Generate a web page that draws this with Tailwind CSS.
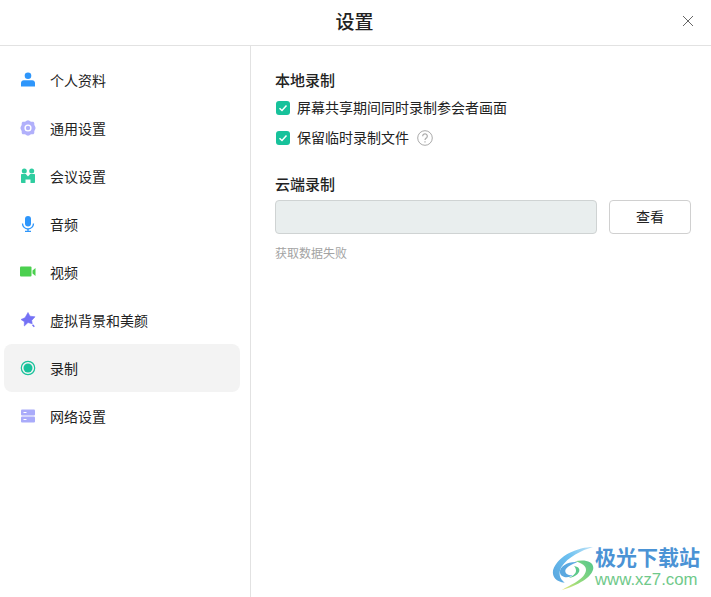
<!DOCTYPE html>
<html lang="zh">
<head>
<meta charset="utf-8">
<script src="https://cdn.jsdelivr.net/npm/@tailwindcss/browser@4"></script>
</head>
<body class="bg-white">
<div class="relative w-[711px] h-[597px] overflow-hidden flex flex-col bg-white text-[#222] font-['Liberation_Sans','Noto_Sans_CJK_SC',sans-serif]">
  <header class="relative h-[46px] shrink-0 border-b border-[#e2e2e2] flex items-center justify-center">
    <h1 class="text-[19px] font-medium leading-none text-[#222] -ml-[2px]">设置</h1>
    <svg class="absolute left-[682px] top-[15px] w-3 h-3" viewBox="0 0 12 12" fill="none" stroke="#666" stroke-width="1"><path d="M1 1l10 10M11 1L1 11"/></svg>
  </header>
  <div class="flex flex-1 min-h-0">
    <nav class="w-[251px] shrink-0 border-r border-[#e2e2e2] pt-[10px] pl-[4px] pr-[10px] text-[14px] text-[#222]">
      <a class="h-12 flex items-center gap-[14px] pl-4 rounded-lg">
        <svg class="w-4 h-4" viewBox="0 0 16 16"><circle cx="8" cy="3.700" r="3.300" fill="#2e96fb"/><path d="M1 11c0-1.600 1.200-2.800 2.800-2.800h8.400c1.600 0 2.800 1.200 2.800 2.800v3.500H1z" fill="#2e96fb"/></svg>
        <span class="mt-[2px]">个人资料</span>
      </a>
      <a class="h-12 flex items-center gap-[14px] pl-4 rounded-lg">
        <svg class="w-4 h-4" viewBox="0 0 16 16"><path fill-rule="evenodd" d="M6.500.800a3 3 0 013 0l1 .6c.4.200.8.300 1.200.3h1.100c.8 0 1.500.7 1.500 1.500v1.300c0 .4.100.8.300 1.100l.5.900a3 3 0 010 3l-.5.900c-.2.300-.3.700-.3 1.100v1.300c0 .8-.7 1.500-1.500 1.500h-1.100c-.4 0-.8.100-1.200.3l-1 .6a3 3 0 01-3 0l-1-.6c-.4-.2-.8-.3-1.200-.3H3.200c-.8 0-1.500-.7-1.500-1.500v-1.300c0-.4-.1-.8-.3-1.100l-.5-.9a3 3 0 010-3l.5-.9c.2-.3.3-.7.3-1.100V3.200c0-.8.700-1.500 1.500-1.500h1.100c.4 0 .8-.1 1.200-.3zM8 4.400a3.600 3.600 0 100 7.200 3.600 3.600 0 000-7.200z" fill="#b1b0fb"/><circle cx="8" cy="8" r="2.200" fill="#b1b0fb"/></svg>
        <span class="mt-[2px]">通用设置</span>
      </a>
      <a class="h-12 flex items-center gap-[14px] pl-4 rounded-lg">
        <svg class="w-4 h-4" viewBox="0 0 16 16" fill="#2fcda0"><circle cx="4.300" cy="3" r="2.500"/><circle cx="11.700" cy="3" r="2.500"/><path d="M1 7c0-.6.400-1 1-1h3.800l2.200 2.600L10.200 6H14c.6 0 1 .4 1 1v7c0 .6-.4 1-1 1h-3.500v-3.500h-5V15H2c-.6 0-1-.4-1-1z"/></svg>
        <span class="mt-[2px]">会议设置</span>
      </a>
      <a class="h-12 flex items-center gap-[14px] pl-4 rounded-lg">
        <svg class="w-4 h-4" viewBox="0 0 16 16"><rect x="5" y="0" width="6" height="10.500" rx="3" fill="#2e96fb"/><path d="M2.500 7.500a5.500 5.500 0 0011 0" fill="none" stroke="#2e96fb" stroke-width="1.300"/><path d="M8 13v2.300M5 15.500h6" stroke="#2e96fb" stroke-width="1.300"/></svg>
        <span class="mt-[2px]">音频</span>
      </a>
      <a class="h-12 flex items-center gap-[14px] pl-4 rounded-lg">
        <svg class="w-4 h-4" viewBox="0 0 16 16" fill="#4bd04f"><rect x="0" y="2.500" width="11.500" height="10" rx="1"/><path d="M12.500 6.500l3-2.500v8l-3-2.500z"/></svg>
        <span class="mt-[2px]">视频</span>
      </a>
      <a class="h-12 flex items-center gap-[14px] pl-4 rounded-lg">
        <svg class="w-4 h-4" viewBox="0 0 16 16" fill="#7471f5"><path d="M8 .5l2 3.700 5 .6-3.300 3.600.5 3.400-4.200-1.300L4.300 14l.1-4.300L1 7.500l4-1.700z" stroke="#7471f5" stroke-width=".6" stroke-linejoin="round"/><path d="M12.500 12.800l1.800 2" fill="none" stroke="#7471f5" stroke-width="1.400"/></svg>
        <span class="mt-[2px]">虚拟背景和美颜</span>
      </a>
      <a class="h-12 flex items-center gap-[14px] pl-4 rounded-lg bg-[#f3f3f3]">
        <svg class="w-4 h-4" viewBox="0 0 16 16"><circle cx="8" cy="8" r="6.700" fill="none" stroke="#17c29b" stroke-width="1.200"/><circle cx="8" cy="8" r="4.500" fill="#17c29b"/></svg>
        <span class="mt-[2px]">录制</span>
      </a>
      <a class="h-12 flex items-center gap-[14px] pl-4 rounded-lg">
        <svg class="w-4 h-4" viewBox="0 0 16 16"><rect x="1" y="1.500" width="14" height="6" rx="1" fill="#a9abfa"/><rect x="1" y="8.500" width="14" height="6" rx="1" fill="#a9abfa"/><path d="M3.500 4.500h3M3.500 11.500h3" stroke="#fff" stroke-width="1"/></svg>
        <span class="mt-[2px]">网络设置</span>
      </a>
    </nav>
    <main class="flex-1 pl-6 pr-5 text-[14px]">
      <h2 class="mt-[25px] h-[20px] leading-5 font-medium text-[15px]">本地录制</h2>
      <label class="mt-[7px] h-[20px] flex items-center gap-[7px] pl-[1px]">
        <span class="w-[14px] h-[14px] rounded-[3px] bg-[#17c29b] flex items-center justify-center"><svg class="w-[10px] h-[10px]" viewBox="0 0 10 10" fill="none" stroke="#fff" stroke-width="1.500"><path d="M1.500 5.200l2.500 2.300 4.500-5"/></svg></span>
        <span>屏幕共享期间同时录制参会者画面</span>
      </label>
      <label class="mt-[10px] h-[20px] flex items-center gap-[7px] pl-[1px]">
        <span class="w-[14px] h-[14px] rounded-[3px] bg-[#17c29b] flex items-center justify-center"><svg class="w-[10px] h-[10px]" viewBox="0 0 10 10" fill="none" stroke="#fff" stroke-width="1.500"><path d="M1.500 5.200l2.500 2.300 4.500-5"/></svg></span>
        <span>保留临时录制文件</span>
        <svg class="w-4 h-4 ml-[1px]" viewBox="0 0 16 16" fill="none" stroke="#aaa"><circle cx="8" cy="8" r="7.300" stroke-width="1"/><path d="M5.700 6.200a2.300 2.300 0 114 1.500c-.8.700-1.700 1.100-1.700 2.300" stroke-width="1.200"/><path d="M8 11.200v1.400" stroke-width="1.200"/></svg>
      </label>
      <h2 class="mt-[27px] h-[20px] leading-5 font-medium text-[15px]">云端录制</h2>
      <div class="mt-[5px] flex gap-3">
        <div class="w-[322px] h-[34px] rounded-[4px] border border-[#cfd3d3] bg-[#e9eeee]"></div>
        <button class="w-[82px] h-[34px] rounded-[4px] border border-[#d0d0d0] bg-white text-[14px]">查看</button>
      </div>
      <p class="mt-[11px] h-[18px] leading-[18px] text-[12px] text-[#a3a3a3]">获取数据失败</p>
    </main>
  </div>
  <div class="absolute left-[548px] top-[542px] w-[163px] h-[50px] flex items-center">
    <svg class="w-[50px] h-[50px] shrink-0" viewBox="0 0 150 150" fill="none">
      <defs>
        <linearGradient id="a" x1="135" y1="15" x2="20" y2="110" gradientUnits="userSpaceOnUse"><stop offset="0" stop-color="#bfe3f7"/><stop offset=".5" stop-color="#6cc0f0"/><stop offset="1" stop-color="#5aa8e0"/></linearGradient>
        <linearGradient id="b" x1="135" y1="70" x2="40" y2="145" gradientUnits="userSpaceOnUse"><stop offset="0" stop-color="#5cc98a"/><stop offset=".6" stop-color="#9bdc7a"/><stop offset="1" stop-color="#f0e77c"/></linearGradient>
      </defs>
      <path d="M135 15C90 15 30 40 15 85c-3 20 10 35 35 37-15-12-20-27-10-47 20-30 60-50 95-60z" fill="url(#a)"/>
      <path d="M88 60C60 58 33 73 36 92c2 14 24 18 38 8-13 1-24-5-22-15 3-10 20-18 36-25z" fill="#5aa8e0"/>
      <path d="M80 58c25-6 56-3 56 20-2 27-46 52-96 67 30-18 70-32 74-60 1-12-12-23-34-27z" fill="url(#b)"/>
      <path d="M78 72c16 2 22 13 10 25-6 6-16 10-26 11 12-6 22-13 22-22 0-5-2-10-6-14z" fill="#5cc98a"/>
    </svg>
    <div class="-ml-[3px] mt-[2px] whitespace-nowrap">
      <div class="text-[21px] leading-[24px] font-bold text-[#4b93d5]">极光下载站</div>
      <div class="text-[16.800px] leading-[20px] text-[#6fc98a]">www.xz7.com</div>
    </div>
  </div>
</div>
</body>
</html>
